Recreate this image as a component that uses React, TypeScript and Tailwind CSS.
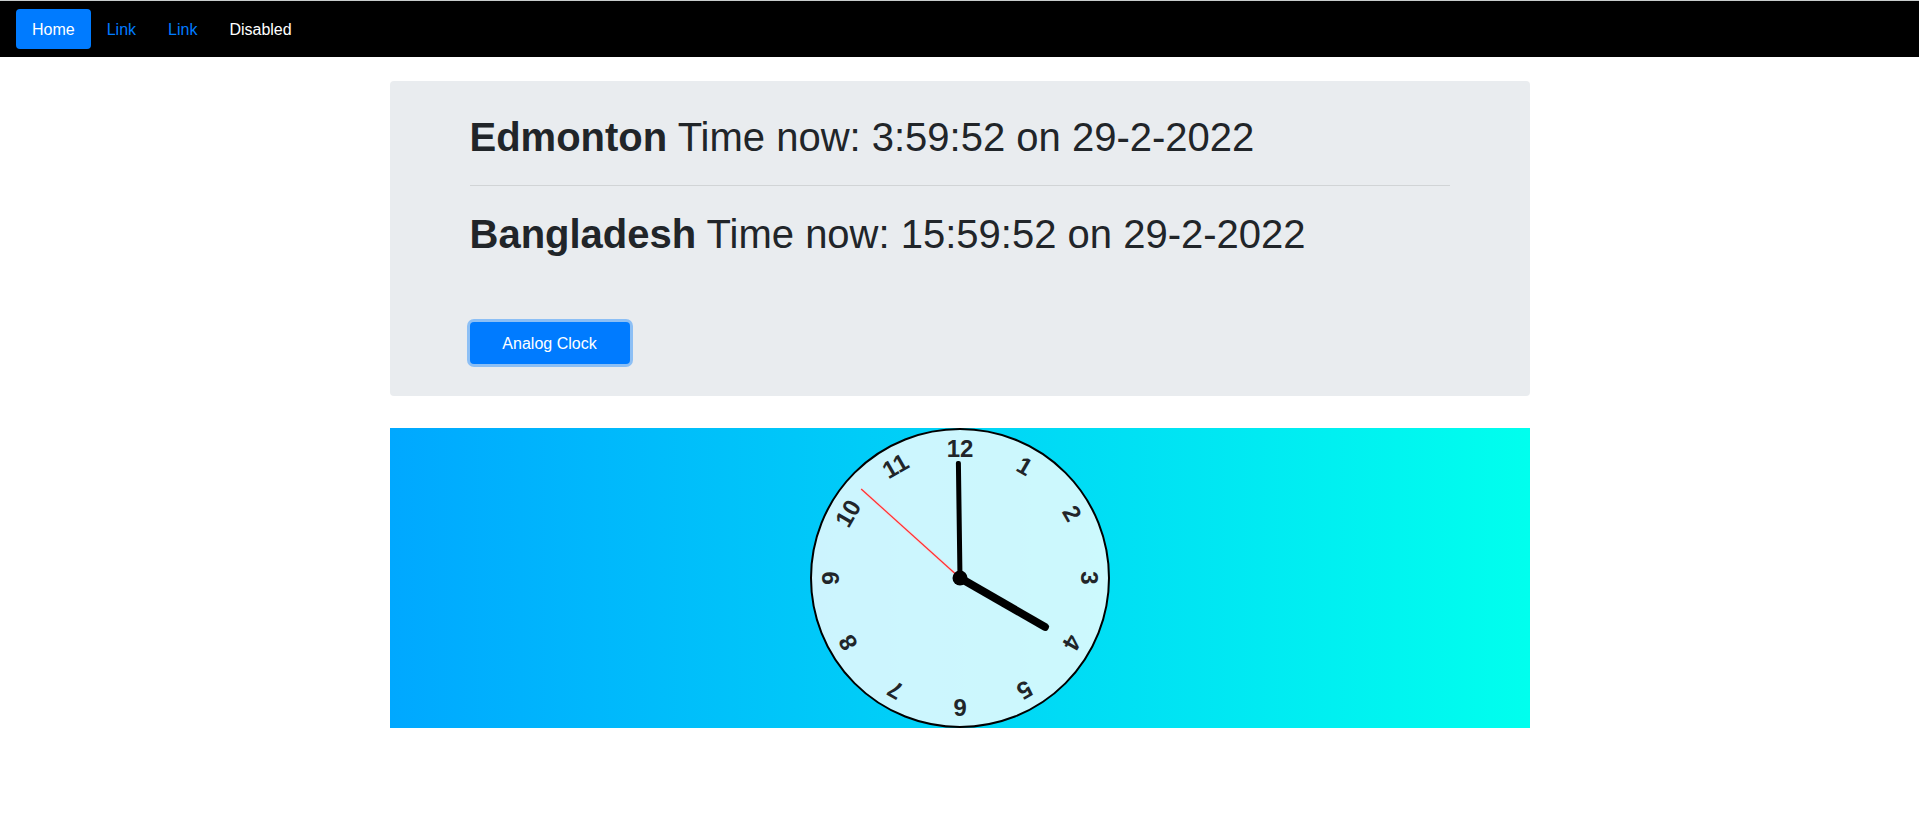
const navLinks = [
  { label: 'Home', style: 'bg-[#007bff] text-white' },
  { label: 'Link', style: 'text-[#007bff]' },
  { label: 'Link', style: 'text-[#007bff]' },
  { label: 'Disabled', style: 'text-white' },
];

const zones = [
  { city: 'Edmonton', time: '3:59:52', date: '29-2-2022' },
  { city: 'Bangladesh', time: '15:59:52', date: '29-2-2022' },
];

const hours = [1, 2, 3, 4, 5, 6, 7, 8, 9, 10, 11, 12];

function Clock({ h, m, s }: { h: number; m: number; s: number }) {
  const second = s * 6;
  const minute = (m + s / 60) * 6;
  const hour = (h + m / 60 + s / 3600) * 30;
  return (
    <svg
      viewBox="-150 -150 300 300"
      role="img"
      aria-label="Analog clock"
      className="size-[300px] text-2xl font-bold"
    >
      <circle r="149" fill="white" fillOpacity="0.8" stroke="black" strokeWidth="2" />
      {hours.map((n) => (
        <text key={n} y="-121" textAnchor="middle" fill="#212529" transform={`rotate(${n * 30})`}>
          {n}
        </text>
      ))}
      <line y2="-133" stroke="#ffc8d0" strokeWidth="3" strokeOpacity="0.5" transform={`rotate(${second})`} />
      <line y2="-133" stroke="#ff3030" strokeWidth="1.2" transform={`rotate(${second})`} />
      <path d="M-2.5 0V-115a2 2 0 0 1 2-2h1a2 2 0 0 1 2 2V0z" transform={`rotate(${minute})`} />
      <path d="M-4 0V-98a4 4 0 0 1 8 0V0z" transform={`rotate(${hour})`} />
      <circle r="7.5" />
    </svg>
  );
}

export default function App() {
  return (
    <div className="bg-white font-['Liberation_Sans',Arial,sans-serif] text-base text-[#212529]">
      <nav className="border-t border-[#c8cccc] bg-black px-4 py-2">
        <ul className="flex">
          {navLinks.map((link, i) => (
            <li key={i}>
              <a href="#" className={`block rounded px-4 pt-[9px] pb-[7px] ${link.style}`}>
                {link.label}
              </a>
            </li>
          ))}
        </ul>
      </nav>
      <main className="mx-auto mt-6 max-w-[1140px]">
        <section className="mb-8 rounded bg-[#e9ecef] px-20 py-8">
          <div className="divide-y divide-black/10">
            {zones.map((zone) => (
              <h1 key={zone.city} className="py-6 text-[40px] leading-12 first:pt-0">
                <b>{zone.city}</b> Time now: {zone.time} on {zone.date}
              </h1>
            ))}
          </div>
          <button
            type="button"
            className="mt-10 block w-40 rounded bg-[#007bff] pt-[10px] pb-2 text-center text-white ring-3 ring-[#007bff]/40"
          >
            Analog Clock
          </button>
        </section>
        <section className="flex justify-center bg-linear-to-r/srgb from-[#00a8ff] to-[#00ffee]">
          <Clock h={3} m={59} s={52} />
        </section>
      </main>
    </div>
  );
}
